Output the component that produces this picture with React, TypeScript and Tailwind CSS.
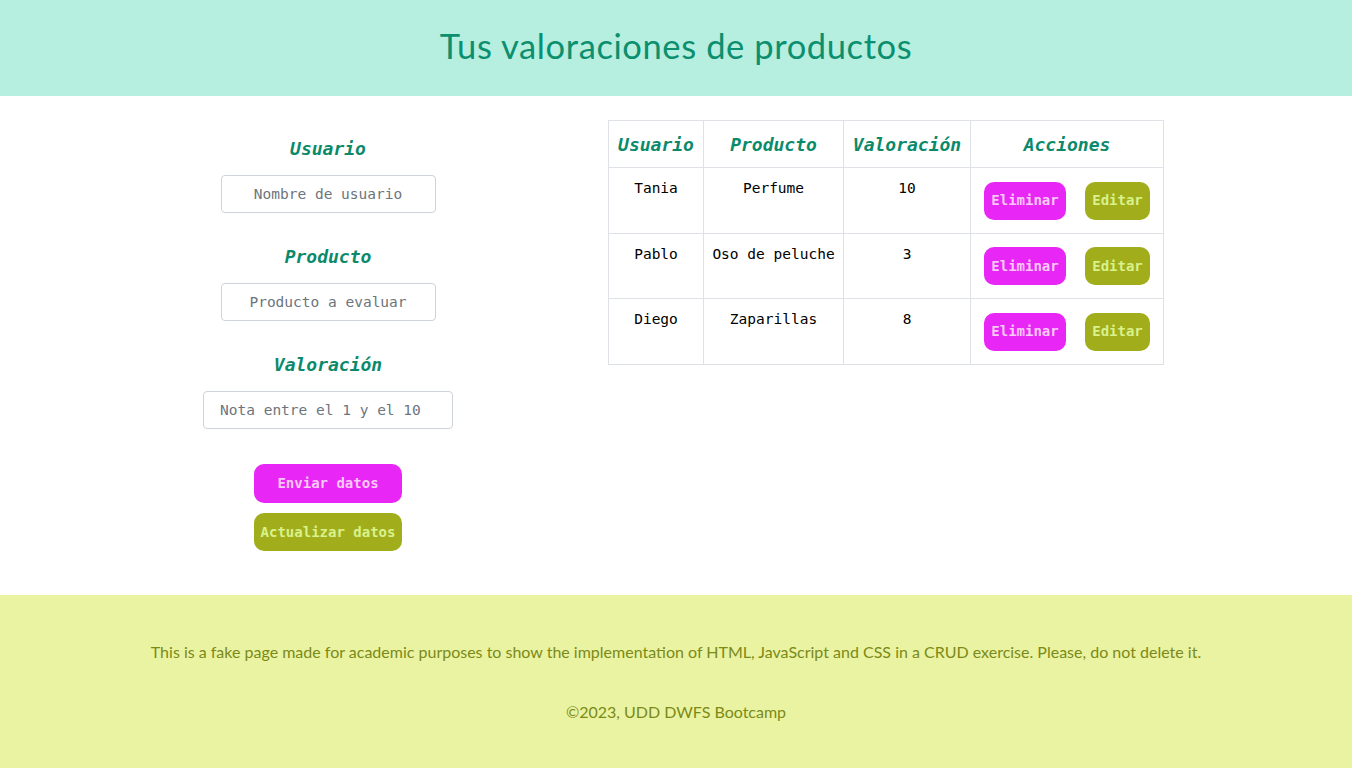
const mono = "font-['Consolas','DejaVu_Sans_Mono',monospace]";
const round = "font-['Lato','Noto_Sans',sans-serif]";

const rows = [
  { usuario: "Tania", producto: "Perfume", nota: "10", h: "h-[66px]" },
  { usuario: "Pablo", producto: "Oso de peluche", nota: "3", h: "h-[65px]" },
  { usuario: "Diego", producto: "Zaparillas", nota: "8", h: "h-[66px]" },
];

const Field = ({ label, placeholder, wide }: { label: string; placeholder: string; wide?: boolean }) => (
  <div className="flex flex-col items-center">
    <label className={`${mono} text-[18px] leading-6 font-bold italic text-[#0b8a6b]`}>{label}</label>
    <input
      placeholder={placeholder}
      className={`${mono} mt-[14px] h-[38px] rounded border border-[#ced4da] text-[14.5px] text-black placeholder:text-[#6c757d] outline-none ${
        wide ? "w-[250px] pl-4 text-left" : "w-[215px] text-center"
      }`}
    />
  </div>
);

export default function App() {
  return (
    <div className="min-h-screen w-full bg-white">
      <header className="flex h-24 items-center justify-center bg-[#b6eee0]">
        <h1 className={`${round} -mt-[5px] text-[34.5px] font-normal tracking-[0.6px] text-[#0b8f6e]`}>
          Tus valoraciones de productos
        </h1>
      </header>

      <main className="flex h-[499px] items-start pl-[100px] pt-6">
        <form className="mt-[17px] flex w-[456px] flex-col items-center" onSubmit={(e) => e.preventDefault()}>
          <Field label="Usuario" placeholder="Nombre de usuario" />
          <div className="h-8" />
          <Field label="Producto" placeholder="Producto a evaluar" />
          <div className="h-8" />
          <Field label="Valoración" placeholder="Nota entre el 1 y el 10" wide />
          <button
            className={`${mono} mt-[35px] h-[39px] w-[148px] rounded-[10px] bg-[#e826f5] text-[14px] font-bold text-[#f9c9f7]`}
          >
            Enviar datos
          </button>
          <button
            className={`${mono} mt-[10px] h-[38px] w-[148px] rounded-[10px] bg-[#a1ad1b] text-[14px] font-bold text-[#d9f28c]`}
          >
            Actualizar datos
          </button>
        </form>

        <table className={`${mono} ml-[52px] border-collapse border border-[#dee2e6] text-[14.5px] text-black`}>
          <thead>
            <tr className="h-[47px]">
              {[
                ["Usuario", "w-[95px]"],
                ["Producto", "w-[140px]"],
                ["Valoración", "w-[127px]"],
                ["Acciones", "w-[192px]"],
              ].map(([h, w]) => (
                <th
                  key={h}
                  className={`${w} border border-[#dee2e6] text-center text-[18px] font-bold italic text-[#0b8a6b]`}
                >
                  {h}
                </th>
              ))}
            </tr>
          </thead>
          <tbody>
            {rows.map((r) => (
              <tr key={r.usuario} className={r.h}>
                <td className="border border-[#dee2e6] pt-[10px] text-center align-top">{r.usuario}</td>
                <td className="border border-[#dee2e6] pt-[10px] text-center align-top">{r.producto}</td>
                <td className="border border-[#dee2e6] pt-[10px] text-center align-top">{r.nota}</td>
                <td className="border border-[#dee2e6] px-[13px]">
                  <div className="flex items-center gap-[19px]">
                    <button className="h-[38px] w-[82px] rounded-[10px] bg-[#e826f5] text-[14px] font-bold text-[#f9c9f7]">
                      Eliminar
                    </button>
                    <button className="h-[38px] w-[65px] rounded-[10px] bg-[#a1ad1b] text-[14px] font-bold text-[#d9f28c]">
                      Editar
                    </button>
                  </div>
                </td>
              </tr>
            ))}
          </tbody>
        </table>
      </main>

      <footer
        className={`${round} flex h-[173px] flex-col items-center justify-center gap-[36px] bg-[#eaf3a2] pt-[1px] text-[16px] text-[#7b8a17]`}
      >
        <p>
          This is a fake page made for academic purposes to show the implementation of HTML, JavaScript and CSS in a CRUD
          exercise. Please, do not delete it.
        </p>
        <p>©2023, UDD DWFS Bootcamp</p>
      </footer>
    </div>
  );
}
